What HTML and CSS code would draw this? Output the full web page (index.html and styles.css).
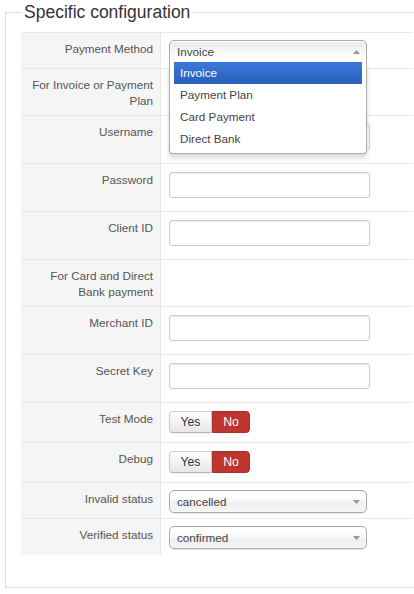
FILE: index.html
```html
<!DOCTYPE html>
<html lang="en">
<head>
<meta charset="utf-8">
<title>Specific configuration</title>
<link rel="stylesheet" href="styles.css">
</head>
<body>
<fieldset class="config">
  <legend class="config-title">Specific configuration</legend>
  <div class="form-table">
    <div class="form-row">
      <div class="label">Payment Method</div>
      <div class="control ctl-select">
        <div class="chosen open">
          <div class="chosen-single">
            <span>Invoice</span>
            <svg class="arrow" width="7" height="4" viewBox="0 0 7 4"><path d="M0 4 L3.5 0 L7 4 Z" fill="#999"/></svg>
          </div>
          <ul class="chosen-drop">
            <li class="hl">Invoice</li>
            <li>Payment Plan</li>
            <li>Card Payment</li>
            <li>Direct Bank</li>
          </ul>
        </div>
      </div>
    </div>
    <div class="form-row">
      <div class="label note">For Invoice or Payment<br>Plan</div>
      <div class="control"></div>
    </div>
    <div class="form-row">
      <div class="label">Username</div>
      <div class="control ctl-input"><div class="input"></div></div>
    </div>
    <div class="form-row">
      <div class="label">Password</div>
      <div class="control ctl-input"><div class="input"></div></div>
    </div>
    <div class="form-row">
      <div class="label">Client ID</div>
      <div class="control ctl-input"><div class="input"></div></div>
    </div>
    <div class="form-row">
      <div class="label note">For Card and Direct<br>Bank payment</div>
      <div class="control"></div>
    </div>
    <div class="form-row">
      <div class="label">Merchant ID</div>
      <div class="control ctl-input"><div class="input"></div></div>
    </div>
    <div class="form-row">
      <div class="label">Secret Key</div>
      <div class="control ctl-input"><div class="input"></div></div>
    </div>
    <div class="form-row">
      <div class="label">Test Mode</div>
      <div class="control ctl-toggle">
        <div class="btn-group"><span class="btn btn-yes">Yes</span><span class="btn btn-no">No</span></div>
      </div>
    </div>
    <div class="form-row">
      <div class="label">Debug</div>
      <div class="control ctl-toggle">
        <div class="btn-group"><span class="btn btn-yes">Yes</span><span class="btn btn-no">No</span></div>
      </div>
    </div>
    <div class="form-row">
      <div class="label">Invalid status</div>
      <div class="control ctl-select">
        <div class="chosen">
          <div class="chosen-single">
            <span>cancelled</span>
            <svg class="arrow" width="7" height="4" viewBox="0 0 7 4"><path d="M0 0 L7 0 L3.5 4 Z" fill="#999"/></svg>
          </div>
        </div>
      </div>
    </div>
    <div class="form-row">
      <div class="label">Verified status</div>
      <div class="control ctl-select last">
        <div class="chosen">
          <div class="chosen-single">
            <span>confirmed</span>
            <svg class="arrow" width="7" height="4" viewBox="0 0 7 4"><path d="M0 0 L7 0 L3.5 4 Z" fill="#999"/></svg>
          </div>
        </div>
      </div>
    </div>
  </div>
</fieldset>
</body>
</html>
```
FILE: styles.css
```css
html, body {
  margin: 0;
  padding: 0;
  overflow: hidden;
  background: #fff;
}
body {
  font-family: "Liberation Sans", Arial, sans-serif;
  font-size: 11.7px;
  color: #333;
}
.config {
  margin: 0 0 0 5px;
  padding: 7px 15px 32px 15px;
  border: 1px solid #ddd;
  width: 392px;
  min-width: 0;
}
.config-title {
  font-size: 17.5px;
  line-height: 25px;
  padding: 0 3px;
  margin: 0;
  color: #333;
}
.form-table {
  display: flex;
  flex-direction: column;
}
.form-row {
  display: grid;
  grid-template-columns: 140px 1fr;
  border-top: 1px solid #e9e9e9;
}
.label {
  background: #f5f5f5;
  border-right: 1px solid #e9e9e9;
  text-align: right;
  padding: 8px 7px 6px 4px;
  line-height: 16px;
  color: #555;
}
.control {
  padding-left: 8px;
  background: #fff;
}
.ctl-input {
  padding-top: 8px;
  padding-bottom: 13px;
}
.ctl-select {
  padding-top: 7px;
  padding-bottom: 5px;
}
.ctl-select.last {
  padding-bottom: 6px;
}
.ctl-toggle {
  padding-top: 8px;
  padding-bottom: 9px;
}
.input {
  width: 201px;
  height: 26px;
  box-sizing: border-box;
  border: 1px solid #ccc;
  border-radius: 3px;
  background: #fff;
  box-shadow: inset 0 1px 1px rgba(0,0,0,0.075);
}
.chosen {
  position: relative;
  width: 198px;
}
.chosen-single {
  height: 23px;
  box-sizing: border-box;
  border: 1px solid #aaa;
  border-radius: 5px;
  background: linear-gradient(#fff 20%, #f6f6f6 50%, #eee 52%, #f4f4f4 100%);
  box-shadow: inset 0 0 3px #fff, 0 1px 1px rgba(0,0,0,0.1);
  padding: 0 6px 0 7px;
  display: flex;
  align-items: center;
  justify-content: space-between;
  color: #444;
  line-height: 21px;
}
.chosen.open .chosen-single {
  border-radius: 5px 5px 0 0;
  background: linear-gradient(#eee 20%, #fff 80%);
  box-shadow: inset 0 1px 0 #fff;
}
.arrow {
  display: block;
}
.chosen-drop {
  position: absolute;
  z-index: 10;
  top: 100%;
  left: 0;
  right: 0;
  margin: -1px 0 0 0;
  list-style: none;
  padding: 0 4px 3px 4px;
  border: 1px solid #aaa;
  border-top: 0;
  border-radius: 0 0 4px 4px;
  background: #fff;
  box-shadow: 0 4px 5px rgba(0,0,0,0.15);
  color: #444;
}
.chosen-drop li {
  height: 22px;
  line-height: 22px;
  padding: 0 6px;
}
.chosen-drop li.hl {
  background: linear-gradient(#3875d7 20%, #2a62bc 90%);
  color: #fff;
}
.btn-group {
  display: flex;
}
.btn {
  height: 22px;
  box-sizing: border-box;
  line-height: 20px;
  text-align: center;
  font-size: 12.2px;
}
.btn-yes {
  width: 43px;
  border: 1px solid #ccc;
  border-bottom-color: #b3b3b3;
  border-radius: 4px 0 0 4px;
  background: linear-gradient(#fff, #e6e6e6);
  color: #333;
  box-shadow: 0 1px 2px rgba(0,0,0,0.05);
}
.btn-no {
  width: 38px;
  border: 1px solid #a4302a;
  border-radius: 0 4px 4px 0;
  background: #bd362f;
  color: #fff;
}
```
